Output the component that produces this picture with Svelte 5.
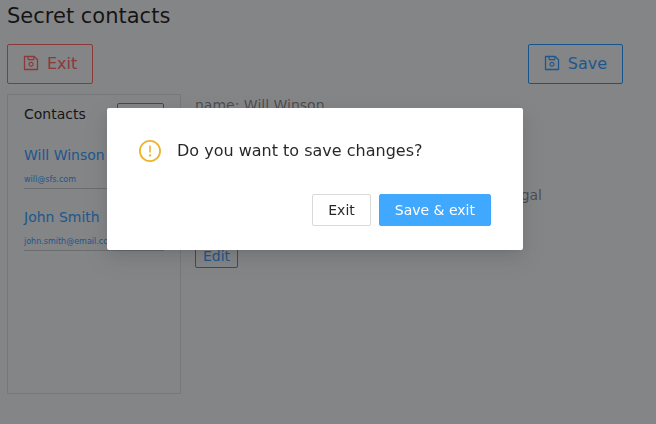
<script>
  const contacts = [
    { name: 'Will Winson', email: 'will@sfs.com' },
    { name: 'John Smith', email: 'john.smith@email.com' }
  ];
</script>

{#snippet saveIcon()}
  <svg viewBox="64 64 896 896" width="16" height="16" fill="currentColor" aria-hidden="true">
    <path d="M893.3 293.3L730.7 130.7c-7.5-7.5-16.7-13-26.7-16V112H144c-17.7 0-32 14.3-32 32v736c0 17.7 14.3 32 32 32h736c17.7 0 32-14.3 32-32V338.5c0-17-6.7-33.2-18.7-45.2zM384 184h256v104H384V184zm456 656H184V184h136v136c0 17.7 14.3 32 32 32h320c17.7 0 32-14.3 32-32V205.8l136 136V840zM512 442c-79.500 0-144 64.500-144 144s64.500 144 144 144 144-64.500 144-144-64.500-144-144-144zm0 224c-44.200 0-80-35.800-80-80s35.800-80 80-80 80 35.800 80 80-35.800 80-80 80z" />
  </svg>
{/snippet}

<div class="page">
  <h1>Secret contacts</h1>
  <div class="toolbar">
    <button class="btn large danger">{@render saveIcon()}<span>Exit</span></button>
    <button class="btn large">{@render saveIcon()}<span>Save</span></button>
  </div>
  <div class="content">
    <aside>
      <div class="heading">
        <span>Contacts</span>
        <button class="btn small add" aria-label="Add contact"></button>
      </div>
      {#each contacts as contact}
        <div class="contact">
          <div class="name">{contact.name}</div>
          <div class="email">{contact.email}</div>
        </div>
      {/each}
    </aside>
    <section>
      <p>name: Will Winson</p>
      <p class="about">legal</p>
      <button class="btn small">Edit</button>
    </section>
  </div>
</div>

<div class="mask">
  <div class="dialog" role="dialog" aria-modal="true">
    <div class="message">
      <svg viewBox="64 64 896 896" width="22" height="22" fill="#eeb32b" aria-hidden="true">
        <path d="M512 64C264.600 64 64 264.600 64 512s200.600 448 448 448 448-200.600 448-448S759.400 64 512 64zm0 820c-205.400 0-372-166.600-372-372s166.600-372 372-372 372 166.600 372 372-166.600 372-372 372z" />
        <path d="M464 688a48 48 0 1 0 96 0 48 48 0 1 0-96 0zm24-112h48c4.400 0 8-3.600 8-8V296c0-4.400-3.600-8-8-8h-48c-4.400 0-8 3.600-8 8v272c0 4.400 3.600 8 8 8z" />
      </svg>
      <span>Do you want to save changes?</span>
    </div>
    <div class="actions">
      <button class="btn default">Exit</button>
      <button class="btn solid">Save &amp; exit</button>
    </div>
  </div>
</div>

<style>
  :global(body) {
    overflow: hidden;
    background: #f0f2f5;
    font-family: "DejaVu Sans", sans-serif;
    font-size: 14px;
    color: rgba(0, 0, 0, 0.85);
  }
  .page {
    box-sizing: border-box;
    height: 424px;
    padding: 0 33px 0 7px;
  }
  h1 {
    margin: 0;
    height: 44px;
    font-size: 21px;
    font-weight: 400;
    line-height: 33px;
  }
  .toolbar {
    display: flex;
    justify-content: space-between;
    height: 50px;
  }
  .btn {
    box-sizing: border-box;
    display: inline-flex;
    align-items: center;
    justify-content: center;
    height: 32px;
    padding: 0 15px;
    border: 1px solid #2c9aff;
    border-radius: 2px;
    background: transparent;
    color: #3a9fff;
    font: inherit;
    white-space: nowrap;
  }
  .large {
    height: 40px;
    padding-bottom: 2px;
    gap: 8px;
    font-size: 16px;
  }
  .danger {
    border-color: #ff686c;
    color: #ff686c;
  }
  .small {
    height: 24px;
    padding: 0 7px;
  }
  .content {
    display: flex;
    gap: 14px;
  }
  aside {
    box-sizing: border-box;
    width: 174px;
    height: 300px;
    padding: 8px 16px;
    border: 1px solid #d9dbde;
    overflow: hidden;
  }
  .heading {
    display: flex;
    justify-content: space-between;
    height: 36px;
    line-height: 22px;
  }
  .add {
    width: 47px;
  }
  .contact {
    height: 50px;
    margin-bottom: 12px;
    border-bottom: 1px solid #c3c5c8;
    box-sizing: border-box;
    color: #3a9fff;
  }
  .name {
    padding-top: 5px;
    line-height: 22px;
  }
  .email {
    margin-top: 8px;
    font-size: 8px;
    line-height: 12px;
  }
  section {
    color: rgba(0, 0, 0, 0.45);
  }
  section p {
    margin: 0 0 68px;
    line-height: 22px;
  }
  section .about {
    width: 347px;
    margin-bottom: 38px;
    text-align: right;
  }
  .mask {
    position: fixed;
    inset: 0;
    padding-top: 108px;
    background: rgba(0, 0, 0, 0.45);
  }
  .dialog {
    box-sizing: border-box;
    width: 416px;
    height: 142px;
    margin-left: 107px;
    padding: 32px 32px 24px;
    border-radius: 2px;
    background: #fff;
    box-shadow: 0 3px 6px -4px rgba(0, 0, 0, 0.12), 0 6px 16px rgba(0, 0, 0, 0.08), 0 9px 28px 8px rgba(0, 0, 0, 0.05);
  }
  .message {
    display: flex;
    align-items: center;
    gap: 16px;
    height: 22px;
    font-size: 16px;
  }
  .message span {
    padding-bottom: 2px;
  }
  .actions {
    display: flex;
    justify-content: flex-end;
    gap: 8px;
    margin-top: 32px;
  }
  .default {
    border-color: #d9d9d9;
    color: rgba(0, 0, 0, 0.85);
  }
  .solid {
    border-color: #40a9ff;
    background: #40a9ff;
    color: #fff;
  }
</style>
